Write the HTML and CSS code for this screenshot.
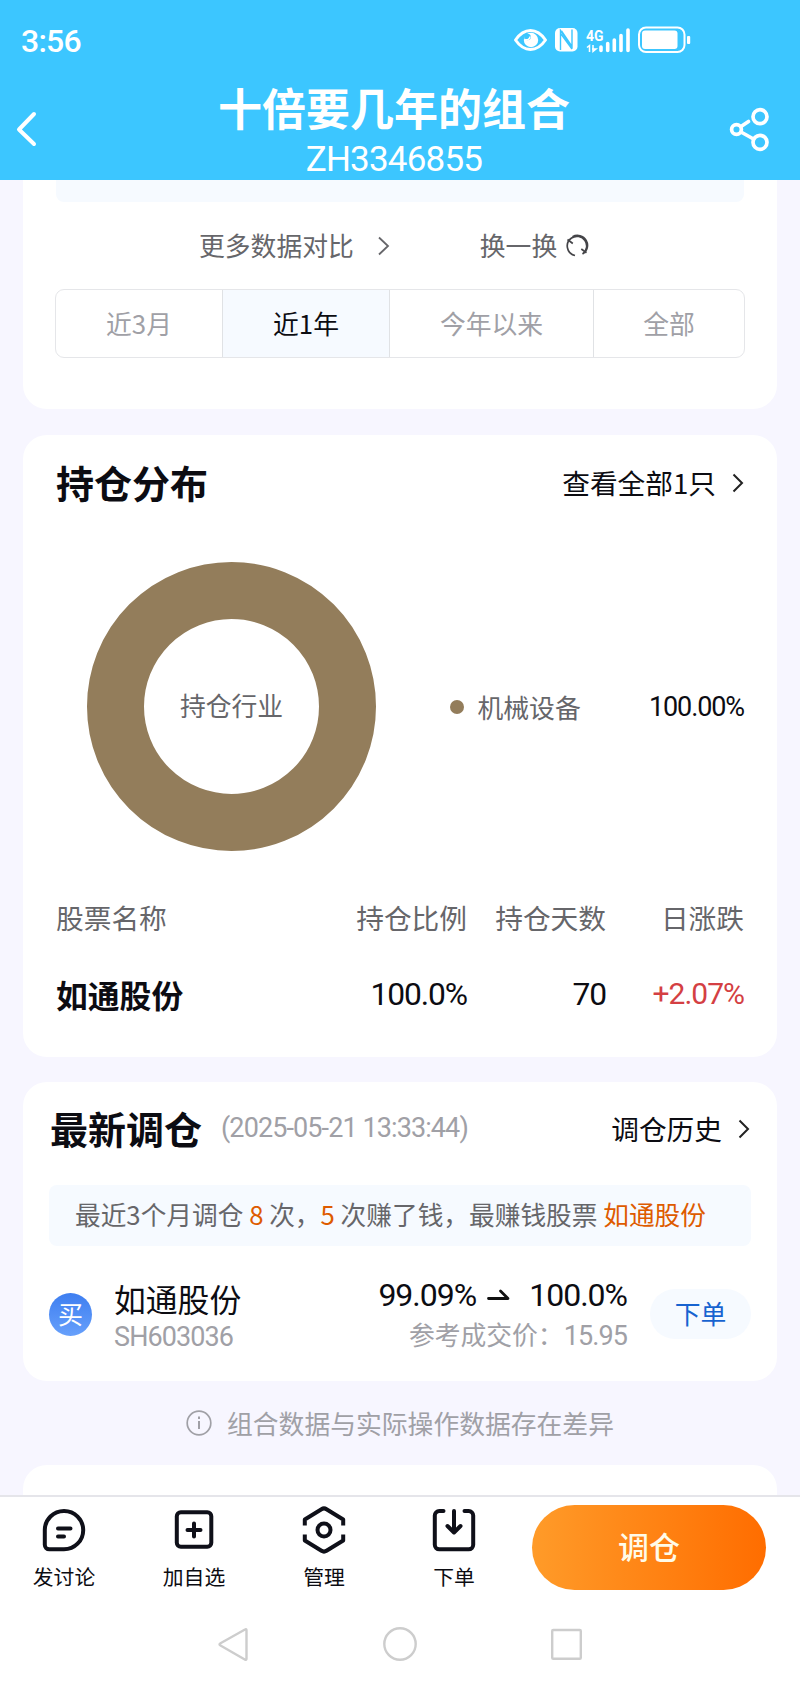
FILE: index.html
```html
<!DOCTYPE html>
<html lang="zh-CN">
<head>
<meta charset="utf-8">
<title>十倍要几年的组合</title>
<link rel="stylesheet" href="styles.css">
</head>
<body>
<header class="header">
  <div class="status">
    <span class="time">3:56</span>
    <svg class="status-icons" width="180" height="32" viewBox="512 24 180 32" fill="none" stroke="#fff">
      <path d="M515.5 40Q522 30.500 530.500 30.500T545.500 40Q539 49.500 530.500 49.500T515.500 40Z" stroke-width="3" stroke-linejoin="round"/>
      <circle cx="531" cy="40" r="7.200" fill="#fff" stroke="none"/>
      <circle cx="527.500" cy="37" r="3.300" fill="#3cc6ff" stroke="none"/>
      <path d="M525 39.500a3.500 3.500 0 0 0 5-3" stroke-width="1.500"/>
      <rect x="555" y="28" width="22.500" height="23.500" rx="5" fill="#fff" stroke="none"/>
      <path d="M560.500 50V30.500L571.500 46M561.500 31L572 46.500V29.500M561 34L572 49" stroke="#3cc6ff" stroke-width="1.400"/>
      <text x="586" y="40.500" class="net" textLength="17.500" lengthAdjust="spacingAndGlyphs">4G</text>
      <path d="M587 47.500L589.500 45.500V52M593 45V51.500L596 49H592" stroke-width="1.500"/>
      <path d="M601 47V50.500M607.700 43.500V50.500M614.300 40V50.500M621 35.500V50.500M628 30V50.500" stroke-width="3.600" stroke-linecap="round"/>
      <rect x="639" y="27.500" width="45.500" height="24.500" rx="7" stroke-width="2"/>
      <rect x="642" y="30.500" width="35.500" height="18.500" rx="3" fill="#fff" stroke="none"/>
      <rect x="687" y="36" width="3.200" height="8" rx="1" fill="#fff" stroke="none"/>
    </svg>
  </div>
  <div class="navbar">
    <svg class="back" width="24" height="40" viewBox="0 0 24 40"><path d="M19 5L4 20.500L19 35" fill="none" stroke="#fff" stroke-width="4" stroke-linecap="round" stroke-linejoin="round"/></svg>
    <div class="heading">
      <h1>十倍要几年的组合</h1>
      <div class="code">ZH3346855</div>
    </div>
    <svg class="share" width="44" height="48" viewBox="728 106 44 48" fill="none" stroke="#fff" stroke-width="3.700" stroke-linecap="round">
      <circle cx="760" cy="116.700" r="7"/><circle cx="760" cy="142.300" r="7"/><circle cx="736.500" cy="129.500" r="4.900"/>
      <path d="M741 126.500L748.500 121.500M741 132L753.500 139"/>
    </svg>
  </div>
</header>

<main class="content">
  <section class="card compare">
    <div class="strip-end"></div>
    <div class="links">
      <span>更多数据对比</span>
      <svg class="link-arrow" width="14" height="22" viewBox="0 0 14 22"><path d="M2 2.500L11 11L2 19.500" fill="none" stroke="#66666a" stroke-width="1.800"/></svg>
      <span class="swap">换一换</span>
      <svg class="refresh" width="24" height="24" viewBox="0 0 24 24" fill="none" stroke="#444448" stroke-width="1.700">
        <path d="M6.500 4A9.700 9.700 0 0 0 10 21.500M17.500 20A9.700 9.700 0 0 0 6.500 4M7.500 2.700A9.700 9.700 0 0 1 17.500 20"/>
        <path d="M3 6.500L7.500 9.500M16.500 14L21 18.500" stroke="#fff" stroke-width="0"/>
        <path d="M2.500 5.500L7.800 9.500M16.300 15L21.500 18.800"/>
      </svg>
    </div>
    <div class="tabs">
      <span class="tab">近3月</span><span class="tab active">近1年</span><span class="tab">今年以来</span><span class="tab">全部</span>
    </div>
  </section>

  <section class="card holdings">
    <div class="card-head">
      <h2>持仓分布</h2>
      <a class="more">查看全部1只<svg class="chev" width="12" height="20" viewBox="0 0 12 20"><path d="M1.500 1.500L10 10L1.500 18.500"/></svg></a>
    </div>
    <div class="chart-row">
      <div class="donut">持仓行业</div>
      <i class="dot"></i>
      <span class="industry">机械设备</span>
      <span class="num share-pct">100.00%</span>
    </div>
    <div class="table thead"><span>股票名称</span><span>持仓比例</span><span>持仓天数</span><span>日涨跌</span></div>
    <div class="table tbody"><b>如通股份</b><span class="num">100.0%</span><span class="num">70</span><span class="num rise">+2.07%</span></div>
  </section>

  <section class="card latest">
    <div class="card-head">
      <h2>最新调仓</h2>
      <span class="num date">(2025-05-21 13:33:44)</span>
      <a class="more">调仓历史<svg class="chev" width="12" height="20" viewBox="0 0 12 20"><path d="M1.500 1.500L10 10L1.500 18.500"/></svg></a>
    </div>
    <div class="summary">最近3个月调仓 <em>8</em> 次，<em>5</em> 次赚了钱，最赚钱股票 <em>如通股份</em></div>
    <div class="trade">
      <span class="buy">买</span>
      <div class="stock"><div class="stock-name">如通股份</div><div class="num stock-code">SH603036</div></div>
      <div class="change">
        <div class="num ratio"><span>99.09%</span><svg width="24" height="12" viewBox="0 0 24 12"><path d="M1.500 9.500H21L13.500 2" fill="none" stroke="#111" stroke-width="2.800" stroke-linecap="round" stroke-linejoin="round"/></svg><span>100.0%</span></div>
        <div class="price">参考成交价：<span class="num">15.95</span></div>
      </div>
      <span class="order">下单</span>
    </div>
  </section>

  <div class="note">
    <svg width="26" height="26" viewBox="0 0 26 26" fill="none" stroke="#a0a0a6"><circle cx="13" cy="13" r="11.800" stroke-width="1.700"/><path d="M13 11V19M13 6.500V9" stroke-width="2"/></svg>
    <span>组合数据与实际操作数据存在差异</span>
  </div>
  <section class="card peek"></section>
</main>

<footer class="toolbar">
  <div class="tool">
    <svg width="48" height="50" viewBox="0 0 48 50"><path d="M4.800 25A19.200 19.200 0 1 1 24 44.300H9.300A4.500 4.500 0 0 1 4.800 39.800Z"/><path d="M18 23.500H30.500M18 31.500H24"/></svg>
    <span>发讨论</span>
  </div>
  <div class="tool">
    <svg width="48" height="50" viewBox="0 0 48 50"><rect x="6.800" y="7.300" width="34.500" height="34.500" rx="4"/><path d="M24 18.500V31.500M17.500 25H30.500"/></svg>
    <span>加自选</span>
  </div>
  <div class="tool">
    <svg width="48" height="50" viewBox="0 0 48 50"><path d="M4.800 20.500V14.500L21.500 4.200Q24 2.600 26.500 4.200L43.200 14.500V20.500M4.800 29.500V35.500L21.500 45.800Q24 47.400 26.500 45.800L43.200 35.500V29.500" stroke-linecap="butt"/><circle cx="24" cy="25" r="6.500"/></svg>
    <span>管理</span>
  </div>
  <div class="tool">
    <svg width="48" height="50" viewBox="0 0 48 50"><path d="M13.500 6H9.300A4.500 4.500 0 0 0 4.800 10.500V39.800A4.500 4.500 0 0 0 9.300 44.300H38.700A4.500 4.500 0 0 0 43.200 39.800V10.500A4.500 4.500 0 0 0 38.700 6H34.500M24 6V27M17.500 21L24 27.500L30.500 21"/></svg>
    <span>下单</span>
  </div>
  <a class="cta">调仓</a>
</footer>
<nav class="sysnav">
  <svg width="366" height="40" viewBox="217 1624 366 40" fill="none" stroke="#cdcdcd" stroke-width="2.400" stroke-linejoin="round"><path d="M245 1629.500Q246.500 1628.500 246.500 1630.500V1658.500Q246.500 1660.500 244.800 1659.500L220.500 1645.500Q218.500 1644.300 220.500 1643.200Z"/><circle cx="400" cy="1644" r="15.700"/><rect x="552.200" y="1630" width="28.600" height="28.800" rx="1"/></svg>
</nav>
</body>
</html>
```
FILE: styles.css
```css
* { box-sizing: border-box; }
body {
  margin: 0;
  width: 800px;
  height: 1687px;
  overflow: hidden;
  display: flex;
  flex-direction: column;
  background: #f7f6ff;
  color: #0c0c12;
  font-family: "Noto Sans CJK SC", sans-serif;
  font-size: 25.8px;
  white-space: nowrap;
}
h1, h2 { margin: 0; font-weight: 700; }
svg { flex: none; display: block; }
.num { font-family: Roboto, "Noto Sans CJK SC", sans-serif; }

.header { height: 180px; background: #3cc6ff; color: #fff; flex: none; }
.status { height: 76px; display: flex; justify-content: space-between; padding: 24px 108px 0 21px; }
.time { font: 500 32px/34px Roboto, sans-serif; letter-spacing: -0.8px; }
.net { font: 700 15px Roboto, sans-serif; fill: #fff; stroke: none; }
.navbar { height: 104px; display: flex; justify-content: space-between; padding: 0 28px 0 15px; }
.back { margin-top: 33px; }
.share { margin-top: 30px; }
.heading { display: flex; flex-direction: column; align-items: center; margin-left: 21px; }
h1 { font-size: 44px; line-height: 62px; }
.code { font: 400 35px/38px Roboto, sans-serif; letter-spacing: -0.8px; margin-top: 3px; }

.content { height: 1315px; flex: none; overflow: hidden; padding: 0 23px; display: flex; flex-direction: column; }
.card { background: #fff; border-radius: 24px; flex: none; }
.compare { height: 229px; border-radius: 0 0 24px 24px; padding: 0 32px; }
.strip-end { height: 22px; margin: 0 1px; background: #f6faff; border-radius: 0 0 8px 8px; }
.links { display: flex; align-items: center; height: 40px; margin-top: 23px; padding-left: 144px; color: #66666a; line-height: 40px; }
.link-arrow { margin: 1px 0 0 23px; }
.swap { margin-left: 89px; }
.refresh { margin-left: 8px; margin-top: 1px; }
.tabs { display: grid; grid-template-columns: 167px 167px 204px 1fr; height: 69px; margin-top: 24px; border: 1px solid #e5e6e9; border-radius: 9px; overflow: hidden; }
.tab { text-align: center; line-height: 66px; color: #a0a0a6; border-right: 1px solid #e0e2e5; }
.tab:last-child { border-right: 0; }
.tab.active { background: #f6faff; color: #0c0c12; }

.holdings { height: 622px; margin-top: 26px; padding: 0 33px; }
.card-head { display: flex; align-items: center; height: 56px; }
h2 { font-size: 38px; line-height: 56px; }
.more { margin-left: auto; display: flex; align-items: center; font-size: 27.7px; line-height: 56px; }
.chev { margin: 1px 0 0 16px; fill: none; stroke: #222; stroke-width: 2; }
.holdings .card-head { margin-top: 18px; padding-top: 0; height: 58px; }
.chart-row { display: flex; align-items: center; height: 289px; margin: 51px 0 0 31px; }
.donut { width: 289px; height: 289px; border: 57.5px solid #937d5b; border-radius: 50%; text-align: center; line-height: 172px; color: #66666a; flex: none; }
.dot { width: 14px; height: 14px; border-radius: 50%; background: #937d5b; margin-left: 73.500px; }
.industry { color: #66666a; margin-left: 14px; }
.share-pct { margin-left: auto; font-size: 27px; letter-spacing: -1.1px; }
.table { display: grid; grid-template-columns: 1fr 140px 139px 138px; text-align: right; }
.table > :first-child { text-align: left; }
.thead { font-size: 27.7px; line-height: 40px; margin-top: 46px; color: #66666a; }
.tbody { font-size: 31.8px; line-height: 46px; margin-top: 34px; }
.tbody .num { letter-spacing: -1.1px; }
.tbody .rise { font-size: 30px; color: #d43f43; letter-spacing: -1px; }

.latest { height: 299px; margin-top: 25px; padding: 0 26px; }
.latest .card-head { margin-top: 18px; padding: 0 0 0 1px; }
.date { color: #a0a0a6; font-size: 27px; letter-spacing: -0.9px; margin-left: 19px; }
.latest .more { padding-right: 1px; }
.summary { height: 61px; margin-top: 29px; padding-left: 26px; line-height: 58px; background: #f6faff; border-radius: 8px; color: #66666a; font-size: 25.7px; }
.summary em { font-style: normal; color: #de5b00; }
.trade { display: flex; align-items: center; height: 94px; margin-top: 21px; }
.buy { width: 43px; height: 43px; border-radius: 50%; background: linear-gradient(#3e7ef0, #67a0fb); color: #fff; text-align: center; line-height: 40px; font-size: 25px; }
.stock { margin-left: 22px; }
.stock-name { font-size: 31.8px; line-height: 46px; }
.stock-code { color: #a0a0a6; font-size: 27px; line-height: 32px; letter-spacing: -0.9px; }
.change { margin-left: auto; margin-right: 23px; }
.ratio { display: flex; align-items: center; font-size: 32px; line-height: 42px; letter-spacing: -1px; }
.ratio svg { margin: 0 18px 0 11px; }
.price { text-align: right; color: #a0a0a6; line-height: 36px; }
.price .num { font-size: 27px; letter-spacing: -0.9px; }
.order { width: 101px; height: 50px; border-radius: 25px; background: #f6faff; color: #1763d0; text-align: center; line-height: 47px; }

.note { display: flex; align-items: center; height: 84px; padding-left: 163px; color: #a0a0a6; flex: none; }
.note span { margin-left: 15px; line-height: 40px; }
.peek { height: 60px; }

.toolbar { height: 105px; flex: none; background: #fff; border-top: 2px solid #e5e5ea; display: flex; }
.tool { width: 130px; display: flex; flex-direction: column; align-items: center; margin-right: 0; font-size: 20.8px; padding-top: 8px; line-height: 34px; position: relative; left: -1px; }
.tool svg { fill: none; stroke: #0f1019; stroke-width: 4; stroke-linecap: round; stroke-linejoin: round; }
.tool span { margin-top: 4px; }
.cta { width: 234px; height: 85px; margin: 8px 0 0 12px; border-radius: 43px; background: linear-gradient(90deg, #ff9b29, #ff6d00); color: #fffbe8; font-size: 31px; font-weight: 500; line-height: 82px; text-align: center; }
.sysnav { flex: 1; background: #fff; display: flex; justify-content: center; padding-top: 24px; }
```
